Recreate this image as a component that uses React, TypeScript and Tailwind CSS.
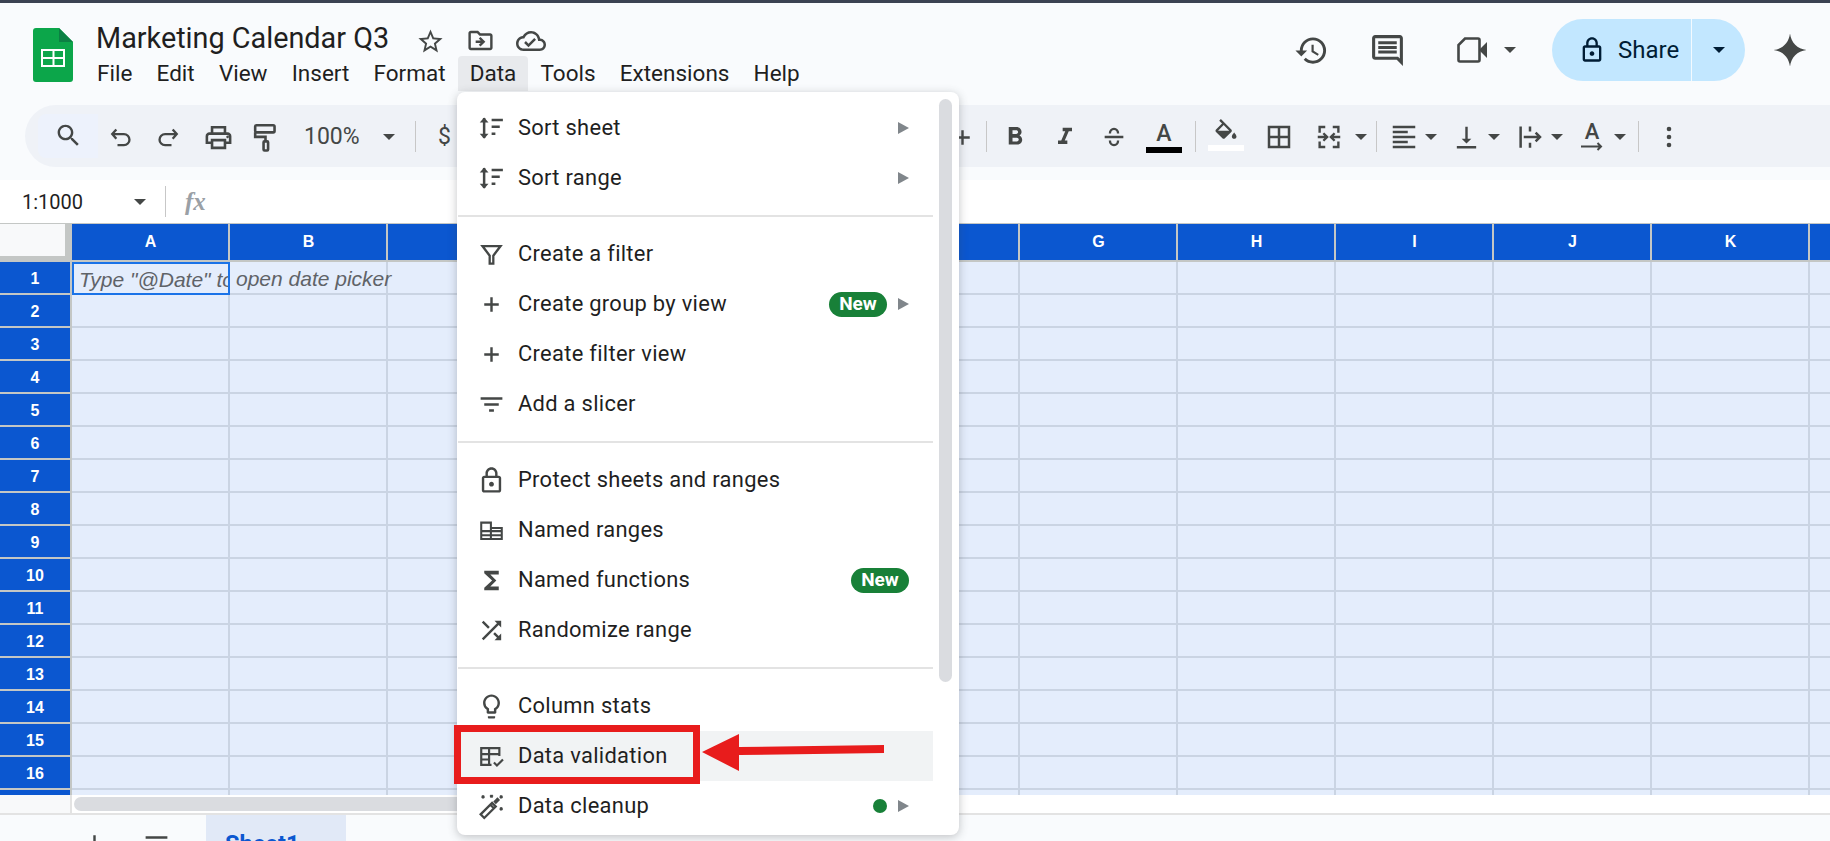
import type { ReactNode } from "react";

const columns = ["A", "B", "C", "D", "E", "F", "G", "H", "I", "J", "K", "L"];
const rows = Array.from({ length: 17 }, (_, i) => i + 1);
const menuLabels = ["File", "Edit", "View", "Insert", "Format", "Data", "Tools", "Extensions", "Help"];

// Material style icon wrapper, 24 unit box
const Ic = ({ d, size = 29, color = "#444746" }: { d: string; size?: number; color?: string }) => (
  <svg width={size} height={size} viewBox="0 0 24 24" fill={color} className="block shrink-0">
    <path d={d} />
  </svg>
);

const Stroke = ({ children, size = 29, width = 2 }: { children: ReactNode; size?: number; width?: number }) => (
  <svg width={size} height={size} viewBox="0 0 24 24" fill="none" stroke="#444746" strokeWidth={width} className="block shrink-0">
    {children}
  </svg>
);

const Caret = ({ className = "", color = "#444746" }: { className?: string; color?: string }) => (
  <svg width="12" height="6" viewBox="0 0 12 6" className={`block shrink-0 ${className}`}>
    <polygon points="0,0 12,0 6,6" fill={color} />
  </svg>
);

const Sep = ({ className = "" }: { className?: string }) => <div className={`w-px h-[31px] -mt-[2px] bg-[#c7c7c7] shrink-0 ${className}`} />;

const Slot = ({ className, children }: { className: string; children: ReactNode }) => (
  <div className={`flex items-center justify-center shrink-0 ${className}`}>{children}</div>
);

const paths = {
  star: "M22 9.24l-7.19-.62L12 2 9.19 8.63 2 9.24l5.46 4.73L5.82 21 12 17.27 18.18 21l-1.63-7.03L22 9.24zM12 15.4l-3.76 2.27 1-4.28-3.32-2.88 4.38-.38L12 6.1l1.71 4.04 4.38.38-3.32 2.88 1 4.28L12 15.4z",
  move: "M20 6h-8l-2-2H4c-1.1 0-2 .9-2 2v12c0 1.1.9 2 2 2h16c1.1 0 2-.9 2-2V8c0-1.1-.9-2-2-2zm0 12H4V6h5.17l2 2H20v10zm-8.01-9l-1.41 1.41L12.16 12H8v2h4.16l-1.59 1.59L11.99 17 16 13.01 11.99 9z",
  cloud: "M19.35 10.04C18.67 6.59 15.64 4 12 4 9.11 4 6.6 5.64 5.35 8.04 2.34 8.36 0 10.91 0 14c0 3.31 2.69 6 6 6h13c2.76 0 5-2.24 5-5 0-2.64-2.05-4.78-4.65-4.96zM19 18H6c-2.21 0-4-1.79-4-4 0-2.05 1.53-3.76 3.56-3.97l1.07-.11.5-.95C8.08 7.14 9.94 6 12 6c2.62 0 4.88 1.86 5.39 4.43l.3 1.5 1.53.11c1.56.1 2.78 1.41 2.78 2.96 0 1.65-1.35 3-3 3zm-9-3.82l-2.09-2.09L6.5 13.5 10 17l6.01-6.01-1.41-1.41z",
  history: "M13 3a9 9 0 0 0-9 9H1l3.89 3.89.07.14L9 12H6c0-3.87 3.13-7 7-7s7 3.13 7 7-3.13 7-7 7c-1.93 0-3.68-.79-4.94-2.06l-1.42 1.42A8.954 8.954 0 0 0 13 21a9 9 0 0 0 0-18zm-1 5v5l4.28 2.54.72-1.21-3.5-2.08V8H12z",
  comment: "M21.99 4c0-1.1-.89-2-1.99-2H4c-1.1 0-2 .9-2 2v12c0 1.1.9 2 2 2h14l4 4-.01-18zM20 4v13.17L18.83 16H4V4h16zM6 12h12v2H6zm0-3h12v2H6zm0-3h12v2H6z",
  lock: "M18 8h-1V6c0-2.76-2.24-5-5-5S7 3.24 7 6v2H6c-1.1 0-2 .9-2 2v10c0 1.1.9 2 2 2h12c1.1 0 2-.9 2-2V10c0-1.1-.9-2-2-2zM9 6c0-1.66 1.34-3 3-3s3 1.34 3 3v2H9V6zm9 14H6V10h12v10zm-6-3c1.1 0 2-.9 2-2s-.9-2-2-2-2 .9-2 2 .9 2 2 2z",
  search: "M15.5 14h-.79l-.28-.27C15.41 12.59 16 11.11 16 9.5 16 5.91 13.09 3 9.5 3S3 5.91 3 9.5 5.91 16 9.5 16c1.61 0 3.09-.59 4.23-1.57l.27.28v.79l5 4.99L20.49 19l-4.99-5zm-6 0C7.01 14 5 11.99 5 9.5S7.01 5 9.5 5 14 7.01 14 9.5 11.99 14 9.5 14z",
  print: "M19 8h-1V3H6v5H5c-1.66 0-3 1.34-3 3v6h4v4h12v-4h4v-6c0-1.66-1.34-3-3-3zM8 5h8v3H8V5zm8 12v2H8v-4h8v2zm2-2v-2H6v2H4v-4c0-.55.45-1 1-1h14c.55 0 1 .45 1 1v4h-2zm0-3.500a1 1 0 1 0 0-.01z",
  bold: "M15.6 10.79c.97-.67 1.65-1.77 1.65-2.79 0-2.26-1.75-4-4-4H7v14h7.04c2.09 0 3.71-1.7 3.71-3.79 0-1.52-.86-2.82-2.15-3.42zM10 6.5h3c.83 0 1.5.67 1.5 1.5s-.67 1.5-1.5 1.5h-3v-3zm3.5 9H10v-3h3.5c.83 0 1.5.67 1.5 1.5s-.67 1.5-1.5 1.5z",
  italic: "M10 4v3h2.21l-3.42 8H6v3h8v-3h-2.21l3.42-8H18V4z",
  fill: "M16.56 8.94L7.62 0 6.21 1.41l2.38 2.38-5.15 5.15c-.59.59-.59 1.54 0 2.12l5.5 5.5c.29.29.68.44 1.06.44s.77-.15 1.06-.44l5.5-5.5c.59-.58.59-1.53 0-2.12zM5.21 10L10 5.21 14.79 10H5.21zM19 11.5s-2 2.17-2 3.5c0 1.1.9 2 2 2s2-.9 2-2c0-1.33-2-3.5-2-3.5z",
  borders: "M3 3v18h18V3H3zm8 16H5v-6h6v6zm0-8H5V5h6v6zm8 8h-6v-6h6v6zm0-8h-6V5h6v6z",
  align: "M15 15H3v2h12v-2zm0-8H3v2h12V7zM3 13h18v-2H3v2zm0 8h18v-2H3v2zM3 3v2h18V3H3z",
  valign: "M16 13h-3V3h-2v10H8l4 4 4-4zM4 19v2h16v-2H4z",
  filterList: "M10 18h4v-2h-4v2zM3 6v2h18V6H3zm3 7h12v-2H6v2z",
  sigma: "M18 4H6v2l6.5 6L6 18v2h12v-3h-7l5-5-5-5h7z",
  shuffle: "M10.59 9.17L5.41 4 4 5.41l5.17 5.17 1.42-1.41zM14.5 4l2.04 2.04L4 18.59 5.41 20 17.96 7.46 20 9.5V4h-5.5zm.33 9.41l-1.41 1.41 3.13 3.13L14.5 20H20v-5.5l-2.04 2.04-3.13-3.13z",
  bulb: "M9 21c0 .55.45 1 1 1h4c.55 0 1-.45 1-1v-1H9v1zm3-19C8.14 2 5 5.14 5 9c0 2.38 1.19 4.47 3 5.74V17c0 .55.45 1 1 1h6c.55 0 1-.45 1-1v-2.26c1.81-1.27 3-3.36 3-5.74 0-3.86-3.14-7-7-7zm2.85 11.1l-.85.6V16h-4v-2.3l-.85-.6A4.997 4.997 0 0 1 7 9c0-2.76 2.24-5 5-5s5 2.24 5 5c0 1.63-.8 3.16-2.15 4.1z",
};

const SortIcon = () => (
  <Stroke size={30}>
    <path d="M6.500 4v16" />
    <path d="M3 7.500 6.500 3.500l3.500 4zM3 16.500l3.500 4 3.500-4z" fill="#444746" stroke="none" />
    <path d="M12.500 5.500h9M12.500 11h6.500M12.500 16.500h3" />
  </Stroke>
);

const PlusIcon = () => (
  <Stroke>
    <path d="M12 6v12M6 12h12" />
  </Stroke>
);

const FunnelIcon = () => (
  <Stroke>
    <path d="M4.500 5h15l-6 8v6.500h-3V13z" strokeWidth="1.9" />
  </Stroke>
);

const NamedRangesIcon = () => (
  <Stroke>
    <path d="M3.500 5.500h8V10h9v9h-17zM3.500 12.500h17M3.500 16h17M11.500 5.500V19" strokeWidth="1.7" />
  </Stroke>
);

const ValidationIcon = () => (
  <Stroke>
    <path d="M12 19H3.500V5h15v6.500M3.500 10h15M10 5v14M3.500 14.500H10" strokeWidth="1.8" />
    <path d="m14 17 2.500 2.500 5-5" strokeWidth="1.8" />
  </Stroke>
);

const WandIcon = () => (
  <Stroke>
    <path d="m3 18.500 9.500-9.500 3 3L6 21.500zM11 10.500l3 3" strokeWidth="1.9" />
    <path d="m4 3 2 2m0-2L4 5M11 2.500l2 2m0-2-2 2M19 3l2 2m0-2-2 2M19 13l2 2m0-2-2 2" strokeWidth="1.5" />
    <path d="M14.500 9 18 5.500" strokeWidth="3" />
  </Stroke>
);

type MenuItem = { label: string; icon: ReactNode; arrow?: boolean; badge?: boolean; dot?: boolean; active?: boolean };

const menuGroups: MenuItem[][] = [
  [
    { label: "Sort sheet", icon: <SortIcon />, arrow: true },
    { label: "Sort range", icon: <SortIcon />, arrow: true },
  ],
  [
    { label: "Create a filter", icon: <FunnelIcon /> },
    { label: "Create group by view", icon: <PlusIcon />, badge: true, arrow: true },
    { label: "Create filter view", icon: <PlusIcon /> },
    { label: "Add a slicer", icon: <Ic d={paths.filterList} /> },
  ],
  [
    { label: "Protect sheets and ranges", icon: <Ic d={paths.lock} /> },
    { label: "Named ranges", icon: <NamedRangesIcon /> },
    { label: "Named functions", icon: <Ic d={paths.sigma} />, badge: true },
    { label: "Randomize range", icon: <Ic d={paths.shuffle} /> },
  ],
  [
    { label: "Column stats", icon: <Ic d={paths.bulb} /> },
    { label: "Data validation", icon: <ValidationIcon />, active: true },
    { label: "Data cleanup", icon: <WandIcon />, dot: true, arrow: true },
  ],
];

const Badge = () => (
  <span className="h-[25px] w-[58px] rounded-full bg-[#188038] text-white text-[19px] font-bold flex items-center justify-center">New</span>
);

const DataMenu = () => (
  <div className="absolute left-[457px] top-[92px] w-[502px] h-[743px] bg-white rounded-lg shadow-[0_2px_10px_rgba(60,64,67,0.3)] pt-[11px] pl-px z-10">
    <div className="absolute right-[7px] top-[7px] w-[13px] h-[583px] rounded-full bg-[#dadce0]" />
    <div className="w-[475px]">
      {menuGroups.map((group, gi) => (
        <div key={gi}>
          {gi > 0 && (
            <div className="h-[26px] flex items-center">
              <div className="w-full h-0.5 bg-[#e3e3e3]" />
            </div>
          )}
          {group.map((item) => (
            <div key={item.label} className={`h-[50px] flex items-center pr-[24px] ${item.active ? "bg-[#f1f3f4]" : ""}`}>
              <div className="w-[60px] pl-[6px] flex justify-center shrink-0">{item.icon}</div>
              <span className="text-[21.9px] text-[#1f1f1f] tracking-[0.3px] flex-1 pt-px">{item.label}</span>
              {item.badge && <Badge />}
              {item.dot && <span className="w-[14px] h-[14px] rounded-full bg-[#188038]" />}
              {item.arrow && (
                <svg width="11" height="12" viewBox="0 0 11 12" className="ml-[11px] shrink-0">
                  <polygon points="0,0 11,6 0,12" fill="#80868b" />
                </svg>
              )}
            </div>
          ))}
        </div>
      ))}
    </div>
  </div>
);

export default function App() {
  return (
    <div className="relative w-[1830px] h-[841px] overflow-hidden flex flex-col bg-[#f9fbfd] font-['Roboto',sans-serif]">
      <div className="h-[3px] bg-[#3b4252] shrink-0" />

      {/* Title bar */}
      <header className="h-[102px] shrink-0 flex pl-[33px]">
        <svg width="40" height="54" viewBox="0 0 40 54" className="mt-[25px] shrink-0">
          <path d="M3 0h23l14 14v37a3 3 0 0 1-3 3H3a3 3 0 0 1-3-3V3a3 3 0 0 1 3-3z" fill="#0ca64a" />
          <path d="M26 0l14 14H26z" fill="#0b8043" />
          <path d="M8 21h24v18H8zM10 23v6h9.500v-6zm11.500 0v6H30v-6zM10 31v6h9.500v-6zm11.500 0v6H30v-6z" fill="#fff" fillRule="evenodd" />
        </svg>
        <div className="ml-[23px] flex flex-col">
          <div className="h-[35px] flex items-center mt-[18px]">
            <span className="text-[28.8px] text-[#1f1f1f] leading-none">Marketing Calendar Q3</span>
            <div className="ml-[27px] mt-[5px]"><Ic d={paths.star} /></div>
            <div className="ml-[21px] mt-[4px]"><Ic d={paths.move} /></div>
            <div className="ml-[21px] mt-[4px]"><Ic d={paths.cloud} size={30} /></div>
          </div>
          <nav className="flex items-center h-[35px] -ml-[11px]">
            {menuLabels.map((label) => (
              <span key={label} className={`h-[35px] px-[12.1px] flex items-center text-[22.5px] text-[#1f1f1f] rounded-t ${label === "Data" ? "bg-[#e8eaed]" : ""}`}>
                {label}
              </span>
            ))}
          </nav>
        </div>
        <div className="ml-auto flex items-center h-[62px] mt-[16px] pr-[22px]">
          <Ic d={paths.history} size={35} />
          <div className="ml-[40px]"><Ic d={paths.comment} size={37} /></div>
          <svg width="30" height="26" viewBox="0 0 30 26" fill="none" stroke="#444746" strokeWidth="2.6" className="ml-[51px]">
            <path d="M8 1.500h13a1.500 1.500 0 0 1 1.500 1.500v20a1.500 1.500 0 0 1-1.500 1.500H3A1.500 1.500 0 0 1 1.500 23V8z" />
            <path d="M22 13l8-8v16z" fill="#444746" stroke="none" />
          </svg>
          <Caret className="ml-[17px]" />
          <div className="ml-[36px] w-[193px] h-[62px] rounded-full bg-[#c2e7ff] flex items-center">
            <div className="ml-[26px]"><Ic d={paths.lock} size={28} color="#001d35" /></div>
            <span className="ml-[12px] text-[24px] text-[#001d35]">Share</span>
            <div className="ml-auto w-px h-[62px] bg-white/80" />
            <div className="w-[53px] flex justify-center"><Caret color="#001d35" /></div>
          </div>
          <svg width="36" height="36" viewBox="0 0 24 24" className="ml-[27px]">
            <path d="M12 1c.8 6.200 4.800 10.200 11 11-6.200.8-10.200 4.800-11 11-.8-6.200-4.800-10.200-11-11 6.200-.8 10.200-4.800 11-11z" fill="#444746" />
          </svg>
        </div>
      </header>

      {/* Toolbar */}
      <div className="h-[75px] shrink-0">
        <div className="ml-[25px] h-[62px] rounded-l-full bg-[#eff2f7] flex items-center pl-[13px] pt-[2px] text-[#444746]">
          <Slot className="w-[60px] h-[44px] -mt-[2px] rounded-l-lg bg-[#edf2fc]"><div className="-mt-[2px]"><Ic d={paths.search} /></div></Slot>
          <Slot className="w-[46px]">
            <Stroke size={28}><path d="M8 5.500 4.500 9.500 8 13.500M5 9.500h9.500a4.750 4.750 0 0 1 0 9.500H9" /></Stroke>
          </Slot>
          <Slot className="w-[48px]">
            <Stroke size={28}><path d="m16 5.500 3.500 4-3.500 4M19 9.500H9.500a4.750 4.750 0 0 0 0 9.500H15" /></Stroke>
          </Slot>
          <Slot className="w-[52px]"><Ic d={paths.print} size={31} /></Slot>
          <Slot className="w-[42px]">
            <Stroke size={31}>
              <rect x="4" y="2.500" width="15" height="5.500" rx="1" />
              <path d="M4 8v3.500h8V15" />
              <rect x="10.500" y="15" width="3.500" height="7" rx=".7" />
            </Stroke>
          </Slot>
          <span className="ml-[18px] w-[57px] text-[23px] text-[#444746]">100%</span>
          <Caret className="ml-[22px]" />
          <Sep className="ml-[20px]" />
          <span className="ml-[22px] w-[13px] text-[23px] text-[#444746]">$</span>

          {/* hidden behind the open menu, only the tail of the font size plus shows */}
          <Slot className="ml-[496px] w-[30px]"><PlusIcon /></Slot>
          <Sep className="ml-[9px]" />
          <Slot className="w-[56px]"><Ic d={paths.bold} size={30} /></Slot>
          <Slot className="w-[44px]"><Ic d={paths.italic} size={28} /></Slot>
          <Slot className="w-[54px]">
            <Stroke size={28}>
              <path d="M4 12h16M8.500 9c0-2.300 1.500-4 3.500-4s3.500 1.700 3.500 4M8.500 15c0 2.300 1.500 4 3.500 4s3.500-1.700 3.500-4" />
            </Stroke>
          </Slot>
          <div className="w-[46px] flex flex-col items-center pt-[2px]">
            <span className="text-[23px] leading-[22px] font-medium text-[#444746]">A</span>
            <div className="w-[36px] h-[6px] mt-[2px] bg-black" />
          </div>
          <Sep className="ml-[8px]" />
          <div className="w-[60px] flex flex-col items-center -mt-[4px]">
            <Ic d={paths.fill} size={28} />
            <div className="w-[36px] h-[6px] -mt-[2px] bg-white" />
          </div>
          <Slot className="w-[46px]"><Ic d={paths.borders} size={30} /></Slot>
          <Slot className="w-[54px]">
            <Stroke size={30} width={1.9}>
              <path d="M9 4H4.500v4.500M4.500 15.500V20H9M15 4h4.500v4.500M19.500 15.500V20H15" />
              <path d="M3 12h7M7.500 9 10.500 12l-3 3M21 12h-7M16.500 9l-3 3 3 3" />
            </Stroke>
          </Slot>
          <Slot className="w-[10px]"><Caret /></Slot>
          <Sep className="ml-[10px]" />
          <Slot className="ml-[8px] w-[38px]"><Ic d={paths.align} size={30} /></Slot>
          <Slot className="ml-[3px] w-[10px]"><Caret /></Slot>
          <Slot className="ml-[10px] w-[40px]"><Ic d={paths.valign} size={29} /></Slot>
          <Slot className="ml-[3px] w-[10px]"><Caret /></Slot>
          <Slot className="ml-[11px] w-[40px]">
            <Stroke size={30}>
              <path d="M4.500 3.500v17M12 3.500v4M12 16.500v4M7 12h13M16.500 8.500 20 12l-3.500 3.500" />
            </Stroke>
          </Slot>
          <Slot className="ml-[2px] w-[10px]"><Caret /></Slot>
          <div className="ml-[10px] w-[40px] flex flex-col items-center">
            <span className="text-[22px] leading-[18px] font-medium text-[#444746]">A</span>
            <svg width="22" height="9" viewBox="0 0 22 9" fill="none" stroke="#444746" strokeWidth="2" className="mt-[1px]">
              <path d="M0 4.500h20M16.500 1l3.500 3.500L16.500 8" />
            </svg>
          </div>
          <Slot className="ml-[3px] w-[10px]"><Caret /></Slot>
          <Sep className="ml-[13px]" />
          <Slot className="ml-[10px] w-[40px]">
            <svg width="6" height="22" viewBox="0 0 6 22" fill="#444746">
              <circle cx="3" cy="3" r="2.300" />
              <circle cx="3" cy="11" r="2.300" />
              <circle cx="3" cy="19" r="2.300" />
            </svg>
          </Slot>
        </div>
      </div>

      {/* Formula bar */}
      <div className="h-[43px] shrink-0 bg-white flex items-center pl-[22px]">
        <span className="w-[112px] text-[20px] text-[#1f1f1f]">1:1000</span>
        <Caret />
        <Sep className="ml-[19px] mt-0" />
        <span className="ml-[19px] text-[25px] font-bold italic text-[#9aa0a6] font-['Liberation_Serif',serif]">fx</span>
      </div>

      {/* Grid */}
      <div className="flex-1 min-h-0 overflow-hidden font-['Liberation_Sans',sans-serif]">
        <div className="flex h-[39px] border-t border-[#c4c7c5] w-[2000px]">
          <div className="w-[72px] h-[38px] bg-[#f8f9fa] border-r-[7px] border-b-[6px] border-[#c4c7c5]" />
          {columns.map((c) => (
            <div key={c} className="w-[158px] h-[38px] pl-px bg-[#0b57d0] border-r-2 border-b-2 border-[#c4c7c5] text-white text-[16px] font-bold flex items-center justify-center">
              {c}
            </div>
          ))}
        </div>
        {rows.map((r) => (
          <div key={r} className="flex h-[33px] w-[2000px]">
            <div className="w-[72px] pt-[2px] bg-[#0b57d0] border-r-2 border-b-2 border-[#c4c7c5] text-white text-[16px] font-bold flex items-center justify-center">
              {r}
            </div>
            {columns.map((c) => {
              const selected = r === 1 && c === "A";
              const spills = r === 1 && c === "B";
              return (
                <div
                  key={c}
                  className={`w-[158px] bg-[#e4edfc] whitespace-nowrap flex items-center pt-[3px] text-[21px] italic text-[#5f6368] ${
                    selected ? "border-2 border-[#1a73e8] pl-[5px]" : "border-r-2 border-b-2 border-[#cad4e3] pl-[6px]"
                  } ${spills ? "overflow-visible relative z-[1]" : "overflow-hidden"}`}
                >
                  {selected && 'Type "@Date" to'}
                  {spills && "open date picker"}
                </div>
              );
            })}
          </div>
        ))}
      </div>

      {/* Horizontal scrollbar */}
      <div className="h-[20px] shrink-0 bg-white flex border-b-2 border-[#e3e3e3]">
        <div className="w-[72px] bg-[#f8f9fa] border-r-2 border-[#e3e3e3]" />
        <div className="ml-[2px] mt-[2px] w-[800px] h-[14px] rounded-full bg-[#dadce0]" />
      </div>

      {/* Sheet tabs */}
      <div className="h-[26px] shrink-0 flex bg-[#f9fbfd]">
        <div className="ml-[80px] mt-[13px]"><PlusIcon /></div>
        <div className="ml-[33px] mt-[14px]"><Ic d="M3 18h18v-2H3v2zm0-5h18v-2H3v2zm0-7v2h18V6H3z" /></div>
        <div className="ml-[35px] w-[140px] bg-[#e1e9f7] pl-[19px] pt-[16px] text-[23.5px] font-bold text-[#0b57d0] leading-[26px]">Sheet1</div>
      </div>

      <DataMenu />

      {/* Callout drawn over the menu */}
      <div className="absolute left-[454px] top-[725px] w-[246px] h-[59px] border-[7px] border-[#e81c1c] z-20" />
      <svg width="184" height="40" viewBox="0 0 184 40" className="absolute left-[701px] top-[733px] z-20">
        <polygon points="1,19 38,1 38,14 183,12 183,20 38,22 38,38" fill="#e81c1c" />
      </svg>
    </div>
  );
}
